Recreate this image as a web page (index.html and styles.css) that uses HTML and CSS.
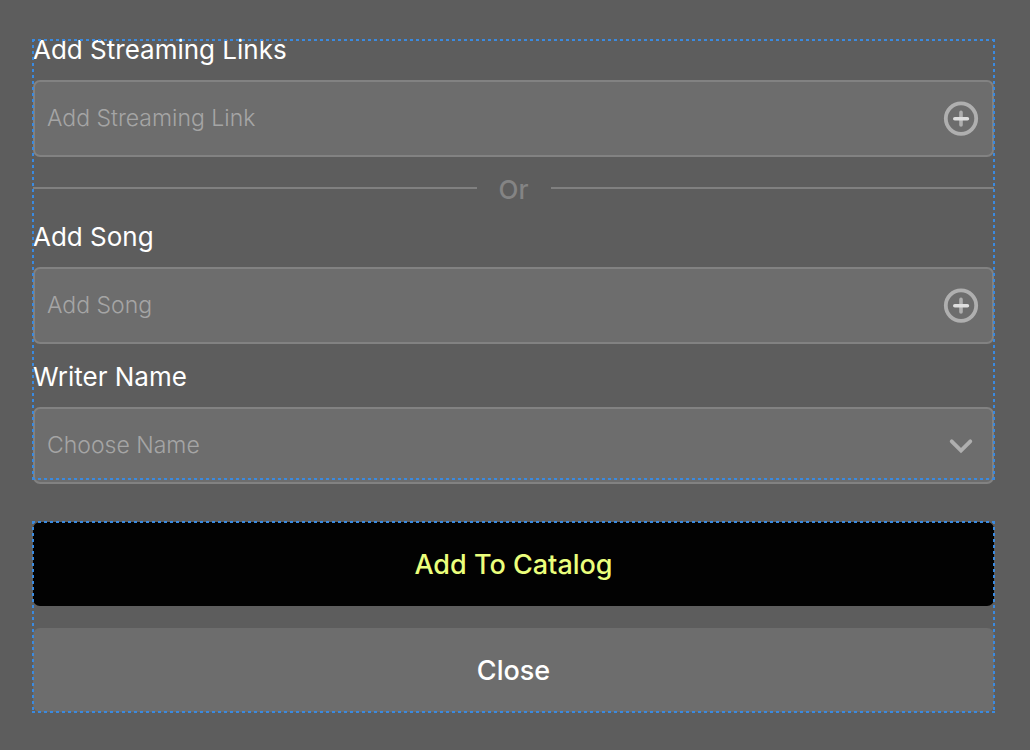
FILE: index.html
```html
<!DOCTYPE html>
<html lang="en">
<head>
<meta charset="utf-8">
<meta name="viewport" content="width=device-width, initial-scale=1">
<title>Add To Catalog</title>
<link rel="stylesheet" href="styles.css">
</head>
<body>
<form class="dialog">
  <div class="group fields">
    <label class="label" for="link">Add Streaming Links</label>
    <div class="field">
      <input class="control" id="link" type="text" placeholder="Add Streaming Link">
      <button class="icon-button" type="button" aria-label="Add link">
        <svg class="icon" viewBox="0 0 36 36"><circle class="ring" cx="18" cy="17.6" r="15.2"/><path class="bar" d="M18 11.4v12.6"/><path class="bar bright" d="M11.8 17.7h12.6"/></svg>
      </button>
    </div>
    <div class="divider"><span class="divider-text">Or</span></div>
    <label class="label" for="song">Add Song</label>
    <div class="field">
      <input class="control" id="song" type="text" placeholder="Add Song">
      <button class="icon-button" type="button" aria-label="Add song">
        <svg class="icon" viewBox="0 0 36 36"><circle class="ring" cx="18" cy="17.6" r="15.2"/><path class="bar" d="M18 11.4v12.6"/><path class="bar bright" d="M11.8 17.7h12.6"/></svg>
      </button>
    </div>
    <label class="label writer" for="writer">Writer Name</label>
    <div class="field">
      <select class="control" id="writer"><option>Choose Name</option></select>
      <svg class="icon chevron" viewBox="0 0 36 36" aria-hidden="true"><path d="M8.7 13.3l9.3 9.2 9.3-9.2"/></svg>
    </div>
  </div>
  <div class="group actions">
    <button class="button primary" type="submit">Add To Catalog</button>
    <button class="button secondary" type="button">Close</button>
  </div>
</form>
</body>
</html>
```
FILE: styles.css
```css
* { box-sizing: border-box; }

body {
  margin: 0;
  background: #5d5d5d;
  color: #fff;
  font-family: Inter, "Liberation Sans", sans-serif;
}

.dialog {
  display: flex;
  flex-direction: column;
  gap: 38px;
  padding: 40px 36px 38px 33px;
}

.group {
  position: relative;
  display: flex;
  flex-direction: column;
}

/* Dashed guide around each group */
.group::after {
  --dash: #3a8ae0 0 3px, transparent 3px 6px;
  content: "";
  position: absolute;
  inset: -1px;
  pointer-events: none;
  background:
    repeating-linear-gradient(90deg, var(--dash)) top / 100% 2px no-repeat,
    repeating-linear-gradient(90deg, var(--dash)) bottom / 100% 2px no-repeat,
    repeating-linear-gradient(180deg, var(--dash)) left / 2px 100% no-repeat,
    repeating-linear-gradient(180deg, var(--dash)) right / 2px 100% no-repeat;
}

.fields::after { bottom: 4px; }

.label {
  margin-bottom: 20px;
  font-size: 26px;
  line-height: 20px;
}

.writer { margin-top: 23px; }

.field {
  display: flex;
  align-items: center;
  position: relative;
  height: 77px;
  border: 2px solid #828282;
  border-radius: 7px;
  background: #6d6d6d;
}

.control {
  flex: 1;
  min-width: 0;
  height: 100%;
  padding: 0 12px 2px;
  border: 0;
  background: transparent;
  appearance: none;
  color: #a5a5a5;
  font-family: inherit;
  font-size: 23px;
  font-weight: 300;
}

.control::placeholder { color: #a5a5a5; opacity: 1; }

.icon-button {
  display: flex;
  margin-right: 13px;
  padding: 0;
  border: 0;
  background: none;
}

.icon {
  width: 36px;
  height: 36px;
  fill: none;
  stroke: #afafaf;
  stroke-width: 3.8;
  stroke-linecap: round;
}

.bar { stroke-width: 3.6; }
.bright { stroke: #dedede; }

.chevron {
  position: absolute;
  right: 13px;
  pointer-events: none;
}

.divider {
  display: flex;
  align-items: center;
  gap: 22px;
  height: 62px;
  margin-bottom: 8px;
}

.divider::before,
.divider::after {
  content: "";
  flex: 1;
  height: 2px;
  background: #808080;
}

.divider-text {
  padding-top: 4px;
  color: #848484;
  font-size: 26px;
  font-weight: 500;
  line-height: 30px;
}

.actions { gap: 22px; }

.button {
  height: 84px;
  border: 0;
  border-radius: 7px;
  font-family: inherit;
  font-size: 27px;
  font-weight: 500;
}

.primary { background: #020202; color: #ebff7c; }
.secondary { background: #6d6d6d; color: #fff; }
```
